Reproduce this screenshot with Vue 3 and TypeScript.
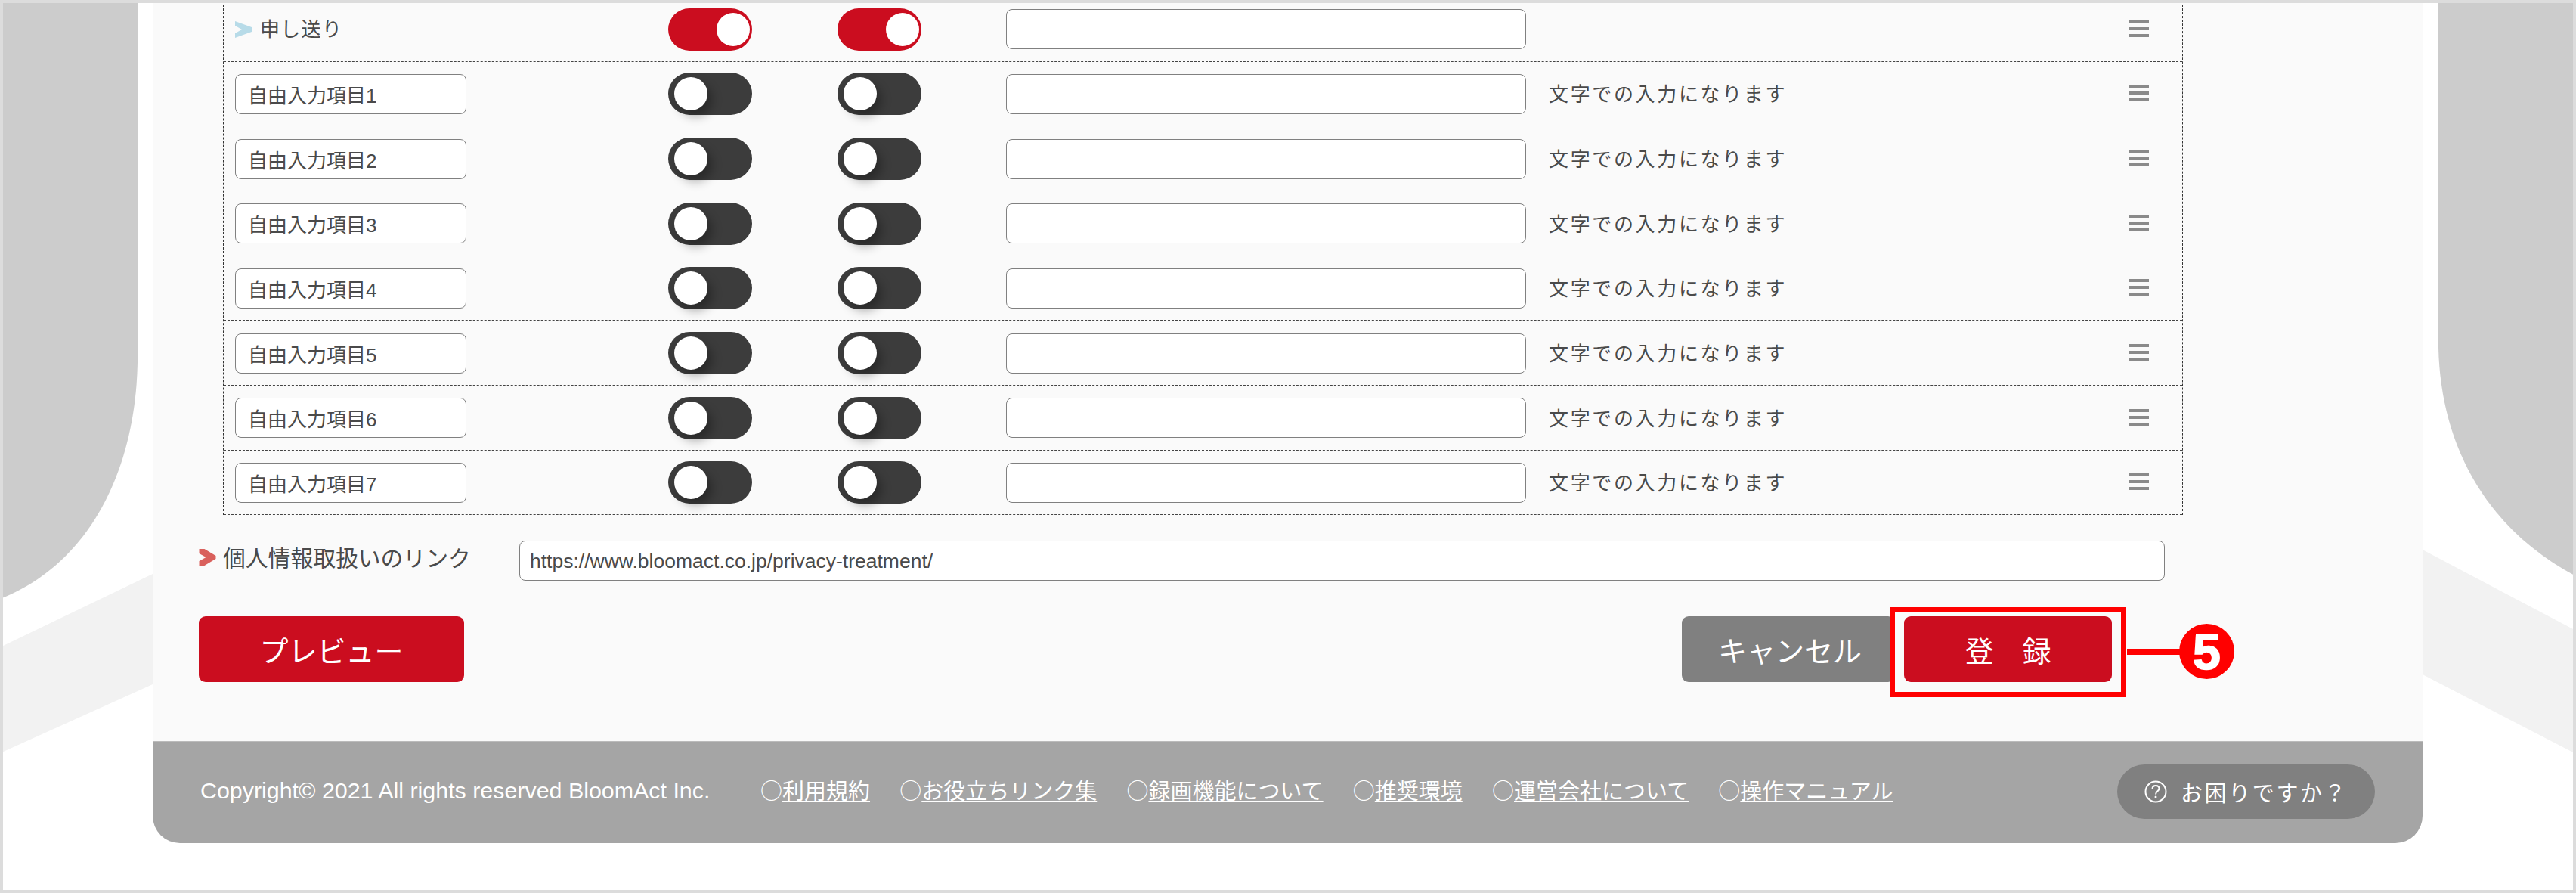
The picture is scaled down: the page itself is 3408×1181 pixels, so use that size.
<script setup lang="ts">
interface Row {
  id: string
  name: string
  on: boolean
  note: string
}

const rows: Row[] = [
  { id: 'handover', name: '申し送り', on: true, note: '' },
  ...[1, 2, 3, 4, 5, 6, 7].map((n) => ({
    id: `free${n}`,
    name: `自由入力項目${n}`,
    on: false,
    note: '文字での入力になります',
  })),
]

const links = ['利用規約', 'お役立ちリンク集', '録画機能について', '推奨環境', '運営会社について', '操作マニュアル']
</script>

<template>
  <div class="page">
    <svg class="deco" width="3408" height="1181" viewBox="0 0 3408 1181" aria-hidden="true">
      <path fill="#f2f2f2" d="M0 856 L202 759 V905 L0 996 Z" />
      <path fill="#f2f2f2" d="M3205 727 L3408 834 V997 L3205 892 Z" />
      <path fill="#cccccc" d="M0 0 H182 V480 C179 620 120 745 0 792 Z" />
      <path fill="#cccccc" d="M3408 0 H3226 V460 C3229 590 3290 700 3408 762 Z" />
    </svg>

    <main class="panel">
      <section class="table">
        <div v-for="row in rows" :key="row.id" class="row">
          <div class="cell-name">
            <template v-if="row.on">
              <svg class="chev" width="22" height="22" viewBox="0 0 22 22" aria-hidden="true">
                <path fill="#b7dbe8" d="M0 0 L22 8 V14 L0 22 V16 L9 11 L0 6 Z" />
              </svg>
              <span class="fixed-name">{{ row.name }}</span>
            </template>
            <input v-else class="field field-name" type="text" :value="row.name" />
          </div>
          <div class="cell-toggle">
            <span class="toggle" :class="{ on: row.on }"><span class="knob"></span></span>
          </div>
          <div class="cell-toggle second">
            <span class="toggle" :class="{ on: row.on }"><span class="knob"></span></span>
          </div>
          <div class="cell-value"><input class="field field-value" type="text" /></div>
          <div class="cell-note">{{ row.note }}</div>
          <div class="cell-handle">
            <span class="handle"><i></i><i></i><i></i></span>
          </div>
        </div>
      </section>

      <section class="privacy">
        <svg class="chev" width="23" height="22" viewBox="0 0 22 22" aria-hidden="true">
          <path fill="#d9605c" d="M0 0 H7 L22 9 V13 L7 22 H0 L0 16 L9 11 L0 6 Z" />
        </svg>
        <span class="privacy-label">個人情報取扱いのリンク</span>
        <input class="field field-url" type="text" value="https://www.bloomact.co.jp/privacy-treatment/" />
      </section>

      <section class="actions">
        <button class="btn red preview" type="button">プレビュー</button>
        <div class="actions-right">
          <button class="btn gray" type="button">キャンセル</button>
          <div class="register-wrap">
            <button class="btn red" type="button">登　録</button>
            <span class="mark-box"></span>
            <span class="mark-line"></span>
            <span class="mark-num">5</span>
          </div>
        </div>
      </section>

      <footer class="footer">
        <span class="copy">Copyright© 2021 All rights reserved BloomAct Inc.</span>
        <nav class="links">
          <span v-for="link in links" :key="link" class="link-item"><span class="ring">○</span><a class="link">{{ link }}</a></span>
        </nav>
        <button class="help" type="button">
          <svg width="30" height="32" viewBox="0 0 30 32" aria-hidden="true">
            <circle cx="15" cy="16" r="13.5" fill="none" stroke="#fff" stroke-width="2" />
            <path d="M10.5 12.5 C10.5 9.5 12.5 8 15 8 C17.8 8 19.5 9.8 19.5 12 C19.5 15 15 15.5 15 19.5" fill="none" stroke="#fff" stroke-width="2" />
            <circle cx="15" cy="23" r="1.5" fill="#fff" />
          </svg>
          <span>お困りですか？</span>
        </button>
      </footer>
    </main>
    <div class="frame"></div>
  </div>
</template>

<style scoped>
.page {
  position: relative;
  width: 3408px;
  height: 1181px;
  overflow: hidden;
  background: #fff;
  font-family: "Liberation Sans", "Noto Sans CJK JP", sans-serif;
  color: #4a4a4a;
}
.deco {
  position: absolute;
  left: 0;
  top: 0;
}
.frame {
  position: absolute;
  inset: 0;
  border: 4px solid #dcdcdc;
  pointer-events: none;
}
.panel {
  position: relative;
  display: flex;
  flex-direction: column;
  width: 3003px;
  height: 1115px;
  margin-left: 202px;
  background: #fafafa;
  border-radius: 0 0 36px 36px;
}
.table {
  flex: none;
  width: 2593px;
  margin: -4.2px 0 0 93px;
  border-left: 1px dashed #333;
  border-right: 1px dashed #333;
  box-sizing: border-box;
}
.row {
  display: grid;
  grid-template-columns: 588px 224px 223px 718px 768px 1fr;
  align-items: center;
  height: 85.7px;
  padding-top: 1px;
  box-sizing: border-box;
  border-bottom: 1px dashed #444;
}
.cell-name {
  display: flex;
  align-items: center;
  padding-left: 15px;
}
.fixed-name {
  margin: 0 0 4px 11px;
  font-size: 26px;
  letter-spacing: 1.3px;
}
.cell-toggle {
  display: flex;
}
.toggle {
  position: relative;
  display: block;
  width: 111px;
  height: 56px;
  border-radius: 28px;
  background: #3c3c3c;
}
.toggle.on {
  background: #cb0d1f;
}
.knob {
  position: absolute;
  top: 6px;
  left: 8px;
  width: 44px;
  height: 44px;
  border-radius: 50%;
  background: #fff;
  box-shadow: 6px 8px 14px rgba(0, 0, 0, 0.32);
}
.toggle.on .knob {
  left: 64px;
  box-shadow: none;
}
.field {
  display: block;
  box-sizing: border-box;
  height: 53px;
  margin: 0;
  border: 1px solid #808080;
  border-radius: 8px;
  background: #fff;
  font-family: "Liberation Sans", "Noto Sans CJK JP", sans-serif;
  font-size: 26px;
  color: #4a4a4a;
  outline: none;
}
.field-name {
  width: 306px;
  padding: 0 16px;
}
.field-value {
  width: 688px;
}
.cell-note {
  margin-bottom: 3px;
  font-size: 26px;
  letter-spacing: 2.65px;
  white-space: nowrap;
}
.handle {
  display: flex;
  flex-direction: column;
  gap: 5px;
  width: 26px;
  margin-bottom: 2px;
}
.handle i {
  display: block;
  height: 4px;
  background: #8a8a8a;
}
.privacy {
  display: flex;
  align-items: center;
  height: 53px;
  margin: 33.6px 0 0 61px;
}
.privacy .chev {
  flex: none;
  margin-top: -8px;
}
.privacy-label {
  width: 392px;
  margin-left: 9px;
  margin-top: -10px;
  font-size: 29.8px;
  white-space: nowrap;
}
.field-url {
  width: 2177px;
  padding: 3px 13px 0;
  font-size: 26.5px;
}
.actions {
  display: flex;
  justify-content: space-between;
  height: 87px;
  margin: 47px 0 0 61px;
  width: 2531px;
}
.actions-right {
  display: flex;
  gap: 12px;
}
.btn {
  display: block;
  width: 275px;
  height: 87px;
  padding: 0;
  border: 0;
  border-radius: 9px;
  color: #fff;
  font-family: "Liberation Sans", "Noto Sans CJK JP", sans-serif;
  font-size: 38px;
}
.btn.red {
  background: #cb0d1f;
}
.btn.gray {
  width: 282px;
  padding-left: 4px;
  background: #808080;
}
.preview {
  width: 351px;
}
.register-wrap {
  position: relative;
}
.mark-box {
  position: absolute;
  inset: -12px -19px -20px -19px;
  border: 7px solid #ff0000;
}
.mark-line {
  position: absolute;
  left: 295px;
  top: 43px;
  width: 70px;
  height: 8px;
  background: #ff0000;
}
.mark-num {
  position: absolute;
  left: 364px;
  top: 10px;
  width: 73px;
  height: 73px;
  border-radius: 50%;
  background: #ff0000;
  color: #fff;
  font-family: "Liberation Sans", sans-serif;
  font-size: 67px;
  font-weight: 700;
  line-height: 73px;
  text-align: center;
  -webkit-text-stroke: 1.5px #fff;
}
.footer {
  display: flex;
  align-items: center;
  box-sizing: border-box;
  height: 135px;
  margin-top: auto;
  padding: 0 0 6px 63px;
  border-top: 1px solid #bbb;
  border-radius: 0 0 36px 36px;
  background: #a5a5a5;
  color: #fff;
  font-size: 29px;
}
.copy {
  width: 741px;
  font-size: 30.4px;
  white-space: nowrap;
}
.links {
  display: flex;
  gap: 39.2px;
  margin-bottom: 3px;
  white-space: nowrap;
}
.ring {
  font-family: "Noto Sans CJK JP", sans-serif;
}
.link {
  text-decoration: underline;
}
.help {
  position: absolute;
  left: 2599px;
  top: 1011px;
  display: flex;
  align-items: center;
  gap: 18px;
  box-sizing: border-box;
  width: 341px;
  height: 72px;
  padding: 0 0 0 36px;
  border: 0;
  border-radius: 36px;
  background: #808080;
  color: #fff;
  font-family: "Liberation Sans", "Noto Sans CJK JP", sans-serif;
  font-size: 29px;
  letter-spacing: 2.6px;
}
</style>
